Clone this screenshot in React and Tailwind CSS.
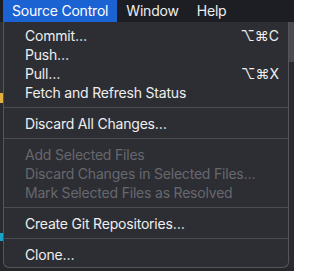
import React from "react";

const font = { fontFamily: "Inter, 'Noto Sans', sans-serif" };

function Item({ label, shortcut, disabled }) {
  return (
    <div className="flex h-[19px] items-center justify-between pl-[21px] pr-[9px]">
      <span className={disabled ? "text-[#67686d]" : "text-[#eeeeee]"}>{label}</span>
      {shortcut && <span className="text-[#eeeeee] tracking-[0px]">{shortcut}</span>}
    </div>
  );
}

function Sep() {
  return <div className="mt-[5px] mb-[6px] h-px bg-[#4b4c52]" />;
}

export default function App() {
  return (
    <div className="relative h-[271px] w-[294px] overflow-hidden bg-[#26272b] text-[14px] leading-none tracking-[-0.2px]" style={font}>
      <div className="flex h-[22px] items-stretch bg-[#1d1e24] text-[#eeeeee]">
        <div className="ml-[3px] flex items-center bg-[#1b62d3] px-[9px] text-white">Source Control</div>
        <div className="flex items-center px-[9px]">Window</div>
        <div className="flex items-center px-[9px]">Help</div>
      </div>
      <div className="flex">
        <div className="flex w-[3px] flex-col">
          <div className="h-[71px] bg-[#303134]" />
          <div className="h-[10px] bg-[#e3b23c]" />
          <div className="h-[130px] bg-[#2a2b2f]" />
          <div className="h-[8px] bg-[#1aa3c8]" />
        </div>
        <div className="h-[246px] w-[286px] rounded-b-[6px] border-x border-b border-[#55565c] bg-[#2d2e34] pt-[4px]">
          <Item label="Commit…" shortcut="⌥⌘C" />
          <Item label="Push…" />
          <Item label="Pull…" shortcut="⌥⌘X" />
          <Item label="Fetch and Refresh Status" />
          <Sep />
          <Item label="Discard All Changes…" />
          <Sep />
          <Item label="Add Selected Files" disabled />
          <Item label="Discard Changes in Selected Files…" disabled />
          <Item label="Mark Selected Files as Resolved" disabled />
          <Sep />
          <Item label="Create Git Repositories…" />
          <Sep />
          <Item label="Clone…" />
        </div>
        <div className="flex w-[5px] flex-col">
          <div className="h-[40px] bg-[#4a4b4f]" />
          <div className="h-[206px] bg-[#2a2b2f]" />
        </div>
      </div>
    </div>
  );
}
